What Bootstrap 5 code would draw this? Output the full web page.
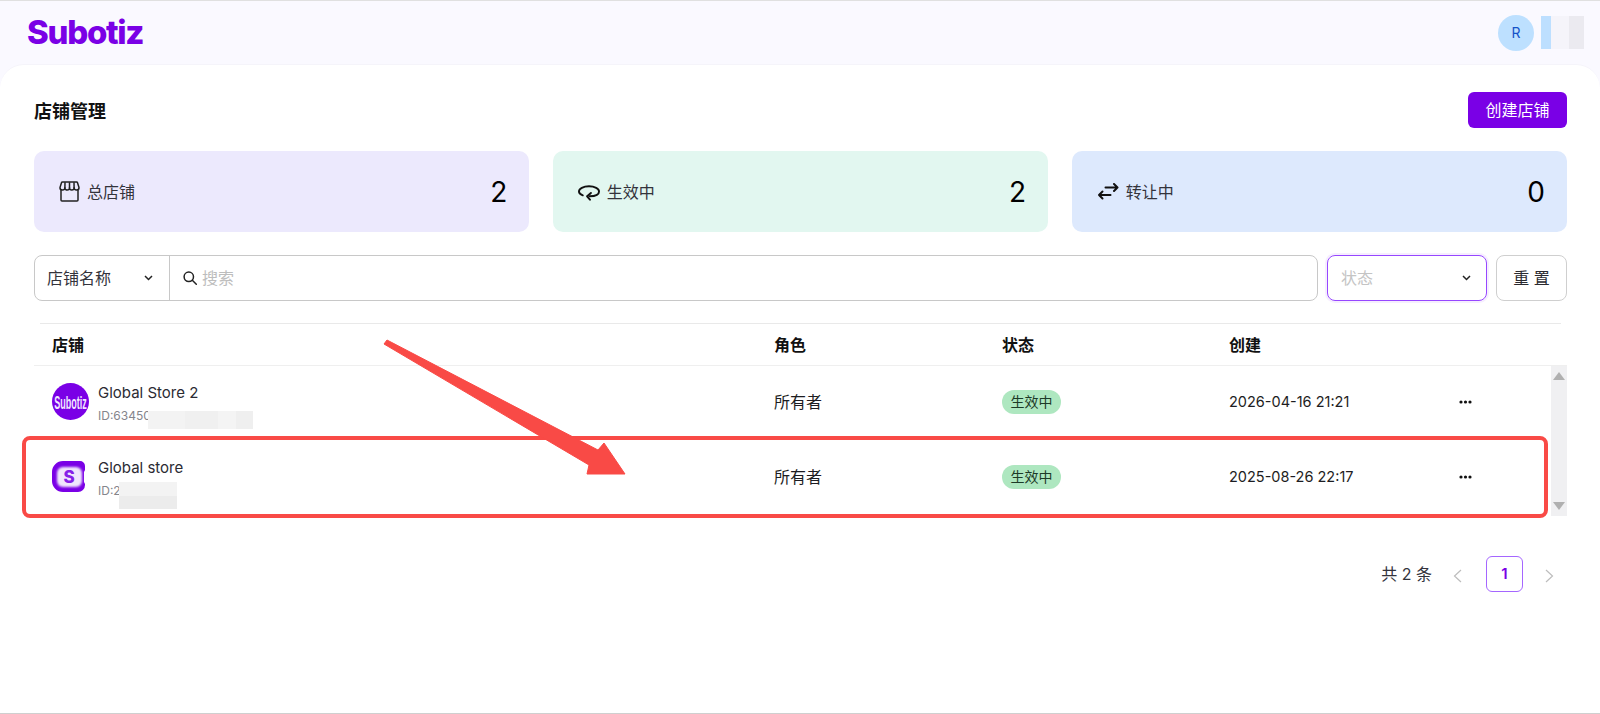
<!DOCTYPE html>
<html lang="zh">
<head>
  <title>店铺管理</title>
  <meta charset="UTF-8" />
  <meta name="viewport" content="width=device-width, initial-scale=1" />
  <link href="https://cdn.jsdelivr.net/npm/bootstrap@5.3.2/dist/css/bootstrap.min.css" rel="stylesheet">
  <style>
    html, body { height: 714px; overflow: hidden; }
    body { font-family: Inter, "Noto Sans CJK SC", sans-serif; font-size: 16px; color: #1d1d22; background: #faf9ff; border-top: 1px solid #e0e0e0; border-bottom: 1px solid #cfcfcf; position: relative; }
    .app-top { height: 63px; padding: 0 16px 0 27px; }
    .brand { font-family: Inter, sans-serif; font-weight: 800; font-size: 33px; letter-spacing: -1.3px; color: #7a00e6; line-height: 1; }
    .user-dot { width: 36px; height: 36px; background: #bde0ff; color: #1553c8; font-size: 14px; }
    .user-blur { width: 43px; height: 33px; margin-left: 7px; background: linear-gradient(90deg, #bddfff 0 10px, #f5f4fa 10px 28px, #ebeaf0 28px); }
    .sheet { background: #fff; border-radius: 24px 24px 0 0; border-top: 1px solid #f5f4fa; height: 649px; padding: 27px 33px 0 34px; }
    .page-name { font-size: 18px; font-weight: 700; color: #111; margin: 0; padding-top: 4px; }
    .btn-brand { background: #7a00e6; color: #fff; height: 36px; width: 99px; padding: 0; border-radius: 6px; font-size: 16px; border: 0; }
    .stats { margin-top: 23px; gap: 23.5px; }
    .stat-box { flex: 1 1 0; height: 81px; border-radius: 10px; padding: 0 22px 0 25px; font-size: 16px; color: #33333b; }
    .stat-box strong { font-weight: 400; font-size: 28px; color: #000; }
    .stat-label { gap: 7px; }
    .tint-a { background: #ece9fd; }
    .tint-b { background: #e2f7f0; }
    .tint-c { background: #dde9fd; }
    .filters { margin-top: 23px; height: 46px; gap: 9px; }
    .search-wrap { flex: 1 1 auto; border: 1px solid #c8c8c8; border-radius: 8px; font-size: 16px; }
    .field-pick { width: 135px; padding: 0 16px 0 12px; border-right: 1px solid #c8c8c8; color: #33333b; }
    .search-wrap .form-control { border: 0; box-shadow: none; padding: 0 0 0 5px; font-size: 16px; background: transparent; }
    .search-wrap .form-control::placeholder { color: #bdbdbd; }
    .search-glass { margin-left: 13px; }
    .state-pick { width: 160px; border: 1px solid #9747ff; border-radius: 8px; box-shadow: 0 0 0 2px rgba(151, 71, 255, .09); padding: 0 15px 0 13px; color: #c4c4c4; font-size: 16px; }
    .btn-reset { width: 71px; height: 46px; padding: 0; font-size: 16px; color: #2a2a30; border: 1px solid #cfcfcf; border-radius: 8px; background: #fff; }
    .list-head { margin: 22px 6px 0; height: 42px; border-top: 1px solid #e9e9e9; padding-left: 12px; display: grid; grid-template-columns: 722px 228px 227px 1fr; align-items: center; font-weight: 700; color: #111; font-size: 16px; }
    .list-wrap { border-top: 1px solid #efefef; }
    .list-rows { flex: 1 1 auto; }
    .list-row { height: 75px; padding: 0 0 4px 18px; display: grid; grid-template-columns: 722px 228px 227px 230px 1fr; align-items: center; }
    .shop-cell { gap: 9px; position: relative; }
    .shop-text { position: relative; top: 2px; }
    .shop-name { font-size: 15px; line-height: 20px; color: #2b2b33; }
    .shop-id { font-size: 12px; line-height: 16px; margin-top: 5px; color: #85858c; }
    .stamp { font-size: 14.5px; }
    .state-pill { display: inline-block; width: 59px; height: 24px; line-height: 24px; text-align: center; border-radius: 12px; background: #aee7c0; font-size: 14px; color: #1d3a28; }
    .row-more { width: 13px; }
    .blur-a, .blur-b { position: absolute; }
    .blur-a { left: 96px; top: 30px; width: 105px; height: 18px; background: linear-gradient(90deg, #f3f3f3 0 37px, #f0f0f0 37px 70px, #f4f4f4 70px 88px, #efefef 88px); }
    .blur-b { left: 67px; top: 26px; width: 58px; height: 27px; background: linear-gradient(180deg, #f3f3f3 0 14px, #ececec 14px); }
    .fake-scroll { width: 16px; background: #f0f0f2; padding: 6px 2px; height: 150px; }
    .scroll-up { width: 0; height: 0; border: 6px solid transparent; border-top: 0; border-bottom: 8px solid #b0b0b0; }
    .scroll-down { width: 0; height: 0; border: 6px solid transparent; border-bottom: 0; border-top: 8px solid #b0b0b0; }
    .pager { margin-top: 40px; padding-right: 13px; color: #33333b; }
    .pager .pagination { margin: 0 0 0 21px; align-items: center; }
    .pager .page-link { border: 0; background: transparent; padding: 0; color: #bdbdbd; }
    .pager .active .page-link { width: 37px; height: 36px; line-height: 34px; text-align: center; border: 1px solid #a566ff; border-radius: 6px; background: #fff; color: #7a00e6; font-weight: 600; margin: 0 23px 0 24px; font-size: 15px; }
    .pager-total { font-size: 16px; }
    .note-layer { position: absolute; left: 0; top: -1px; pointer-events: none; }
  </style>
</head>
<body>
  <header class="app-top d-flex align-items-center justify-content-between">
    <div class="brand">Subotiz</div>
    <div class="d-flex align-items-center">
      <div class="user-dot rounded-circle d-flex align-items-center justify-content-center">R</div>
      <div class="user-blur"></div>
    </div>
  </header>

  <main class="sheet">
    <div class="d-flex align-items-center justify-content-between">
      <h1 class="page-name">店铺管理</h1>
      <button class="btn btn-brand" type="button">创建店铺</button>
    </div>

    <div class="stats d-flex">
      <div class="stat-box tint-a d-flex align-items-center justify-content-between">
        <div class="stat-label d-flex align-items-center">
          <svg width="21" height="21" viewBox="0 0 21 21" fill="none" stroke="#222" stroke-width="1.5" stroke-linejoin="round"><path d="M3.500 1h14a1 1 0 0 1 1 .8L20 6.500a2.400 2.400 0 0 1-4.900.3 2.300 2.300 0 0 1-4.600 0 2.300 2.300 0 0 1-4.600 0A2.400 2.400 0 0 1 1 6.500l1.500-4.700A1 1 0 0 1 3.500 1z"/><path d="M6 1.200 5.900 7M10.500 1.200V7M15 1.200l.1 5.800"/><path d="M2 9v10a1 1 0 0 0 1 1h15a1 1 0 0 0 1-1V9"/></svg>
          <span>总店铺</span>
        </div>
        <strong>2</strong>
      </div>
      <div class="stat-box tint-b d-flex align-items-center justify-content-between">
        <div class="stat-label d-flex align-items-center">
          <svg width="22" height="18" viewBox="0 0 23 18" fill="none" stroke="#111" stroke-width="2" stroke-linecap="round" stroke-linejoin="round"><path d="M5 12.500C2.500 11.500 1 10 1 8.500 1 5.500 5.500 3 11.500 3S22 5.500 22 8.500c0 3-4 5-10 5"/><path d="M13.500 10l-4 3.500 3 3.500"/></svg>
          <span>生效中</span>
        </div>
        <strong>2</strong>
      </div>
      <div class="stat-box tint-c d-flex align-items-center justify-content-between">
        <div class="stat-label d-flex align-items-center">
          <svg width="22" height="18" viewBox="0 0 22 18" fill="none" stroke="#111" stroke-width="2" stroke-linecap="round" stroke-linejoin="round"><path d="M8.500 4.500h12M17 1l3.500 3.500L17 8"/><path d="M13.500 12H2M5.500 8.500 2 12l3.500 3.500"/></svg>
          <span>转让中</span>
        </div>
        <strong>0</strong>
      </div>
    </div>

    <div class="filters d-flex">
      <div class="search-wrap d-flex align-items-center">
        <div class="field-pick h-100 flex-shrink-0 d-flex align-items-center justify-content-between">
          <span>店铺名称</span>
          <svg width="9" height="6" viewBox="0 0 9 6" fill="none" stroke="#222" stroke-width="1.500"><path d="M1 1 4.500 4.500 8 1"/></svg>
        </div>
        <svg class="search-glass flex-shrink-0" width="14" height="14" viewBox="0 0 14 14" fill="none" stroke="#222" stroke-width="1.500" stroke-linecap="round"><circle cx="5.800" cy="5.800" r="4.700"/><path d="m9.300 9.300 4 4"/></svg>
        <input class="form-control" type="text" placeholder="搜索">
      </div>
      <div class="state-pick d-flex align-items-center justify-content-between">
        <span>状态</span>
        <svg width="9" height="6" viewBox="0 0 9 6" fill="none" stroke="#222" stroke-width="1.500"><path d="M1 1 4.500 4.500 8 1"/></svg>
      </div>
      <button class="btn btn-reset" type="button">重 置</button>
    </div>

    <div class="list-head">
      <div>店铺</div><div>角色</div><div>状态</div><div>创建</div>
    </div>
    <div class="list-wrap d-flex">
      <div class="list-rows">
        <div class="list-row">
          <div class="shop-cell d-flex align-items-center">
            <svg width="37" height="37" viewBox="0 0 37 37"><circle cx="18.500" cy="18.500" r="18.500" fill="#7a00e6"/><text transform="translate(18.500 26) scale(.95 2)" text-anchor="middle" fill="#f1e6ff" font-family="Liberation Sans, sans-serif" font-size="9.500" font-weight="700">Subotiz</text></svg>
            <div class="shop-text">
              <div class="shop-name">Global Store 2</div>
              <div class="shop-id">ID:63450</div>
            </div>
            <div class="blur-a"></div>
          </div>
          <div>所有者</div>
          <div><span class="state-pill">生效中</span></div>
          <div class="stamp">2026-04-16 21:21</div>
          <svg class="row-more" width="13" height="4" viewBox="0 0 13 4" fill="#111"><circle cx="2" cy="2" r="1.600"/><circle cx="6.500" cy="2" r="1.600"/><circle cx="11" cy="2" r="1.600"/></svg>
        </div>
        <div class="list-row">
          <div class="shop-cell d-flex align-items-center">
            <svg width="37" height="33" viewBox="0 0 37 33"><defs><filter id="soft"><feGaussianBlur stdDeviation=".8"/></filter></defs><path d="M11 1h17a5 5 0 0 1 5 5v4l-1 2v10l1 2v1a7 7 0 0 1-7 7H11A11 11 0 0 1 0 21V12A11 11 0 0 1 11 1z" fill="#7a00e6"/><rect x="5" y="7" width="25" height="20" rx="6" fill="#f0e6fd" filter="url(#soft)"/><text x="17" y="23" text-anchor="middle" fill="#8520e8" font-family="Inter, sans-serif" font-size="17" font-weight="800">S</text></svg>
            <div class="shop-text">
              <div class="shop-name">Global store</div>
              <div class="shop-id">ID:2</div>
            </div>
            <div class="blur-b"></div>
          </div>
          <div>所有者</div>
          <div><span class="state-pill">生效中</span></div>
          <div class="stamp">2025-08-26 22:17</div>
          <svg class="row-more" width="13" height="4" viewBox="0 0 13 4" fill="#111"><circle cx="2" cy="2" r="1.600"/><circle cx="6.500" cy="2" r="1.600"/><circle cx="11" cy="2" r="1.600"/></svg>
        </div>
      </div>
      <div class="fake-scroll d-flex flex-column justify-content-between align-items-center flex-shrink-0">
        <div class="scroll-up"></div>
        <div class="scroll-down"></div>
      </div>
    </div>

    <div class="pager d-flex align-items-center justify-content-end">
      <span class="pager-total">共 2 条</span>
      <ul class="pagination">
        <li class="page-item"><a class="page-link" href="#"><svg width="9" height="14" viewBox="0 0 9 14" fill="none" stroke="#bdbdbd" stroke-width="1.200"><path d="M8 1 1.500 7 8 13"/></svg></a></li>
        <li class="page-item active"><a class="page-link" href="#">1</a></li>
        <li class="page-item"><a class="page-link" href="#"><svg width="9" height="14" viewBox="0 0 9 14" fill="none" stroke="#bdbdbd" stroke-width="1.200"><path d="m1 1 6.500 6L1 13"/></svg></a></li>
      </ul>
    </div>
  </main>

  <svg class="note-layer" width="1600" height="714" viewBox="0 0 1600 714">
    <rect x="24" y="438" width="1522" height="78" rx="6" fill="none" stroke="#f94a46" stroke-width="4"/>
    <polygon points="387,340 598,450 604,443 625,474 587,474 589,465 384,344" fill="#f94a46" stroke="#f94a46" stroke-linejoin="round"/>
  </svg>
  <script src="https://cdn.jsdelivr.net/npm/bootstrap@5.3.2/dist/js/bootstrap.bundle.min.js"></script>
</body>
</html>
